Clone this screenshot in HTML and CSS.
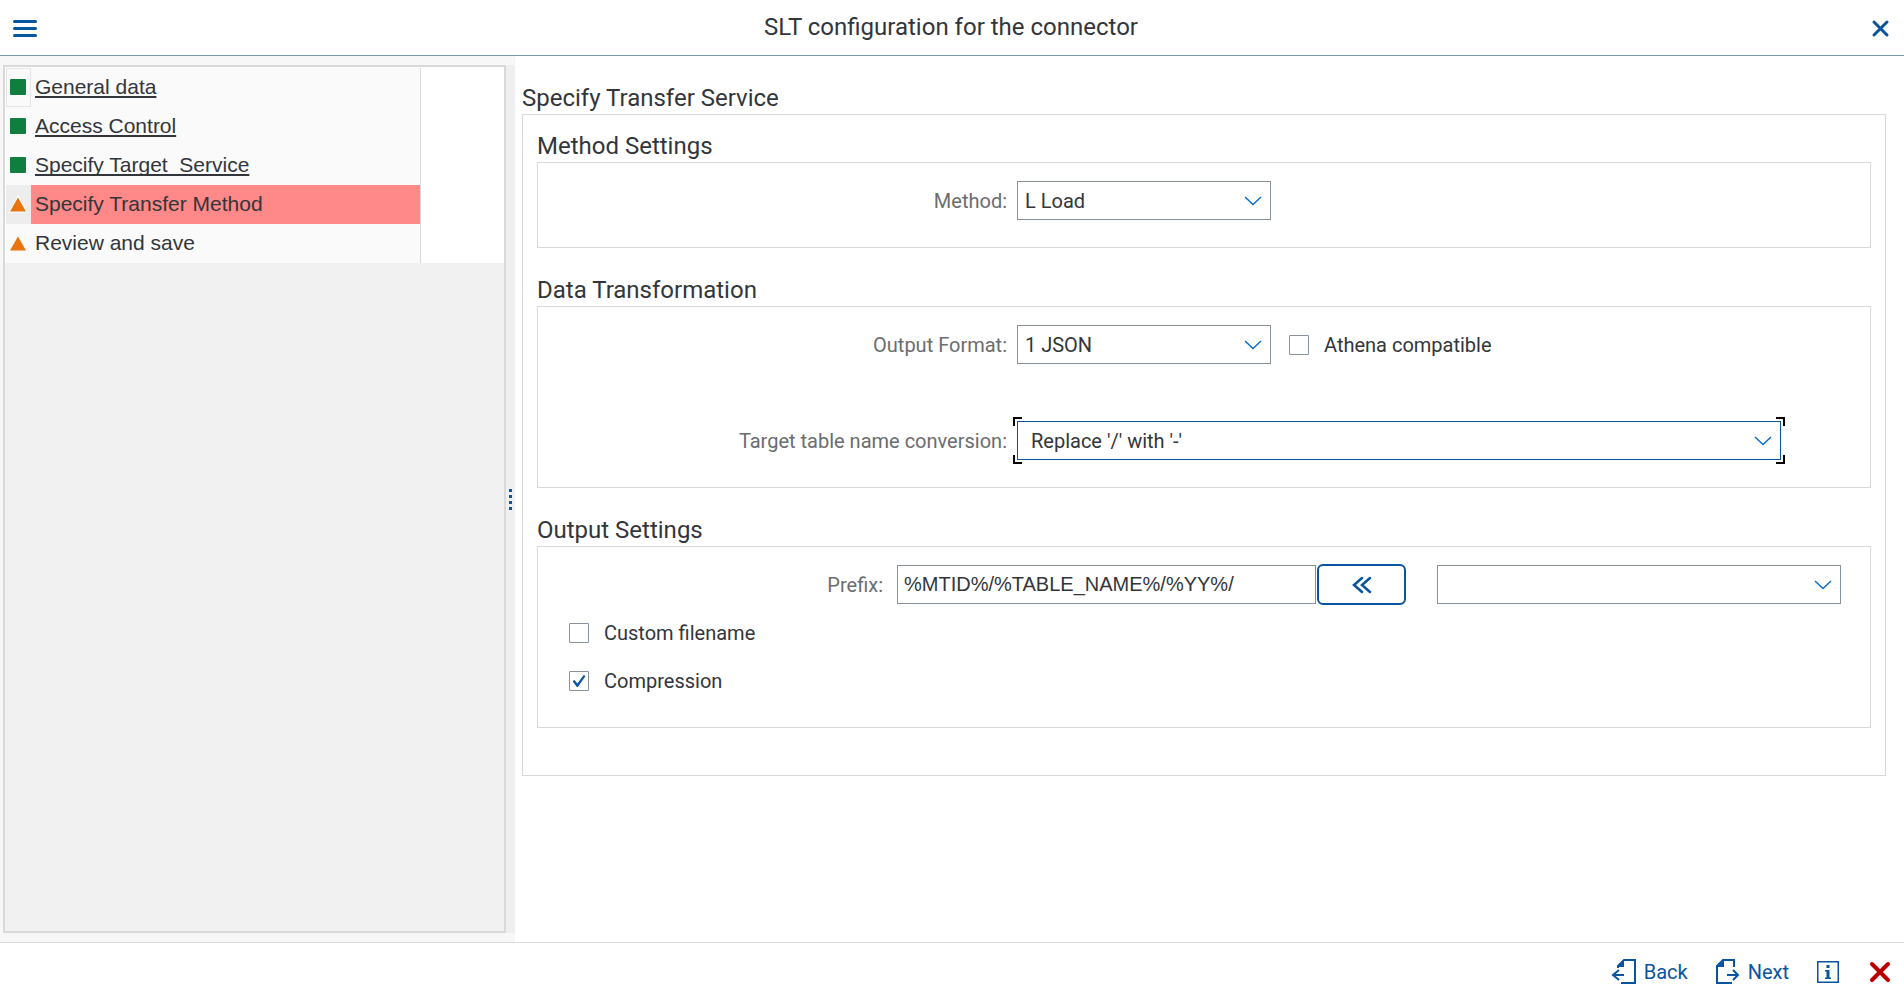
FILE: index.html
```html
<!DOCTYPE html>
<html lang="en">
<head>
<meta charset="utf-8">
<title>SLT configuration for the connector</title>
<link rel="stylesheet" href="styles.css">
</head>
<body>
<header class="topbar">
  <button class="icon-button" type="button" aria-label="Menu">
    <svg width="24" height="18" viewBox="0 0 24 18"><path d="M1.500 1.500h21M1.500 8.500h21M1.500 15.500h21" class="stroke thick"/></svg>
  </button>
  <h1 class="topbar-title">SLT configuration for the connector</h1>
  <button class="icon-button" type="button" aria-label="Close">
    <svg width="17" height="17" viewBox="0 0 17 17"><path d="M2 2l13 13M15 2L2 15" class="stroke thick"/></svg>
  </button>
</header>

<div class="workspace">
  <aside class="sidebar">
    <nav class="step-box" aria-label="Steps">
      <ol class="steps">
        <li class="step">
          <span class="step-status framed"><svg width="16" height="16" viewBox="0 0 16 16"><rect width="16" height="16" rx="1" class="done"/></svg></span>
          <span class="step-name"><a href="#general">General data</a></span>
        </li>
        <li class="step">
          <span class="step-status"><svg width="16" height="16" viewBox="0 0 16 16"><rect width="16" height="16" rx="1" class="done"/></svg></span>
          <span class="step-name"><a href="#access">Access Control</a></span>
        </li>
        <li class="step">
          <span class="step-status"><svg width="16" height="16" viewBox="0 0 16 16"><rect width="16" height="16" rx="1" class="done"/></svg></span>
          <span class="step-name"><a href="#target">Specify Target&nbsp; Service</a></span>
        </li>
        <li class="step current" aria-current="step">
          <span class="step-status"><svg width="16" height="16" viewBox="0 0 16 16"><path d="M8 -1.500L17.500 16.500H-1.500z" class="halo"/><path d="M8 1.500L16 15.500H0z" class="open"/></svg></span>
          <span class="step-name">Specify Transfer Method</span>
        </li>
        <li class="step">
          <span class="step-status"><svg width="16" height="16" viewBox="0 0 16 16"><path d="M8 1.500L16 15.500H0z" class="open"/></svg></span>
          <span class="step-name">Review and save</span>
        </li>
      </ol>
    </nav>
    <div class="splitter"><i></i><i></i><i></i><i></i></div>
  </aside>

  <main class="content">
    <h2 class="heading">Specify Transfer Service</h2>
    <div class="frame">
      <section>
        <h3 class="heading">Method Settings</h3>
        <div class="panel">
          <div class="row">
            <label class="field-label" for="method">Method:</label>
            <span class="select">
              <select id="method"><option>L Load</option></select>
              <svg width="18" height="10" viewBox="0 0 18 10"><path d="M1 1l8 7.500L17 1" class="chevron"/></svg>
            </span>
          </div>
        </div>
      </section>
      <section>
        <h3 class="heading">Data Transformation</h3>
        <div class="panel spaced">
          <div class="row">
            <label class="field-label" for="format">Output Format:</label>
            <span class="select">
              <select id="format"><option>1 JSON</option></select>
              <svg width="18" height="10" viewBox="0 0 18 10"><path d="M1 1l8 7.500L17 1" class="chevron"/></svg>
            </span>
            <label class="check inline"><input type="checkbox">Athena compatible</label>
          </div>
          <div class="row">
            <label class="field-label" for="conversion">Target table name conversion:</label>
            <span class="select wide focused">
              <select id="conversion"><option>Replace '/' with '-'</option></select>
              <svg width="18" height="10" viewBox="0 0 18 10"><path d="M1 1l8 7.500L17 1" class="chevron"/></svg>
              <span class="corners"></span>
            </span>
          </div>
        </div>
      </section>
      <section>
        <h3 class="heading">Output Settings</h3>
        <div class="panel tall">
          <div class="row">
            <label class="field-label short" for="prefix">Prefix:</label>
            <input class="text-input" id="prefix" type="text" value="%MTID%/%TABLE_NAME%/%YY%/">
            <button class="insert" type="button" aria-label="Insert placeholder">
              <svg width="20" height="16" viewBox="0 0 20 16"><path d="M10 1L2 8l8 7M18 1l-8 7 8 7" class="stroke double"/></svg>
            </button>
            <span class="select medium">
              <select aria-label="Placeholder"><option></option></select>
              <svg width="18" height="10" viewBox="0 0 18 10"><path d="M1 1l8 7.500L17 1" class="chevron"/></svg>
            </span>
          </div>
          <label class="check"><input type="checkbox">Custom filename</label>
          <label class="check"><input type="checkbox" checked>Compression</label>
        </div>
      </section>
    </div>
  </main>
</div>

<footer class="actions">
  <button class="action" type="button">
    <svg width="24" height="26" viewBox="0 0 24 26"><path d="M5 8l7-7v7z" class="fill"/><path d="M6 9V7l6-6h11v23H9M12 16H1M7 11l-6 5 6 5" class="line"/></svg>
    Back
  </button>
  <button class="action" type="button">
    <svg width="24" height="26" viewBox="0 0 24 26"><path d="M1 8l7-7v7z" class="fill"/><path d="M18 8V1H7L1 7v17h15M11 16h11M17 11l5 5-5 5" class="line"/></svg>
    Next
  </button>
  <button class="action" type="button" aria-label="Information">
    <svg width="22" height="22" viewBox="0 0 22 22"><rect x="0.750" y="0.750" width="20.500" height="20.500" class="line light"/><path d="M9.500 4h3v3h-3zM8 9h4.500v7.500H14V18H8v-1.500h1.500v-6H8z" class="fill"/></svg>
  </button>
  <button class="action cancel-action" type="button" aria-label="Cancel">
    <svg width="20" height="20" viewBox="0 0 20 20"><path d="M2 2l16 16M18 2L2 18" class="cancel"/></svg>
  </button>
</footer>
</body>
</html>
```
FILE: styles.css
```css
* { box-sizing: border-box; }

body {
  margin: 0;
  min-height: 100vh;
  display: flex;
  flex-direction: column;
  background: #fff;
  color: #32363a;
  font: 20px/24px Roboto, "Liberation Sans", sans-serif;
}

button, input, select { font: inherit; color: inherit; }
button { padding: 0; border: 0; background: none; cursor: pointer; }
svg { display: block; flex: none; overflow: visible; }

.stroke { fill: none; stroke: #0854a0; stroke-width: 2; stroke-linecap: round; }
.double { stroke-width: 2.500; }
.thick { stroke-width: 3; }
.chevron { fill: none; stroke: #0a6ed1; stroke-width: 1.500; }
.line { fill: none; stroke: #0854a0; stroke-width: 2; }
.light { stroke-width: 1.500; }
.fill { fill: #0854a0; }
.cancel { fill: none; stroke: #b00; stroke-width: 4; stroke-linecap: round; }
.done { fill: #107e3e; }
.open { fill: #e9730c; }
.halo { fill: #fff; }

/* Title bar */
.topbar {
  display: grid;
  grid-template-columns: 1fr auto 1fr;
  align-items: center;
  height: 56px;
  padding: 0 15px 0 13px;
  border-bottom: 1px solid #7996b4;
}
.topbar-title { margin: 0; padding-bottom: 2px; font-size: 24px; font-weight: 400; line-height: 32px; }
.icon-button { justify-self: start; padding-top: 2px; }
.icon-button:last-child { justify-self: end; }

/* Step list */
.workspace { flex: 1; display: flex; }
.sidebar {
  display: flex;
  flex: none;
  width: 515px;
  padding: 9px 0 9px 3px;
  background: #f7f7f7;
}
.step-box { flex: 1; border: 2px solid #d9d9d9; background: #f1f1f1; }
.steps {
  margin: 0;
  padding: 1px 83px 0 1px;
  list-style: none;
  background: #fff;
  font-family: "Liberation Sans", Arial, sans-serif;
  font-size: 21px;
}
.step { display: flex; height: 39px; background: #fafafa; border-right: 1px solid #d9d9d9; }
.step-status {
  display: flex;
  align-items: center;
  width: 25px;
  padding: 0 0 2px 4px;
  border: 0 solid #e5e5e5;
}
.step-status.framed { border-width: 1px; padding-left: 3px; }
.step-name { flex: 1; padding: 7px 4px; }
.step-name a { color: inherit; text-decoration-thickness: 2px; text-underline-offset: 2px; text-decoration-skip-ink: none; }
.current .step-status { background: #ededed; }
.current .step-name { background: #ff8888; }

.splitter {
  display: flex;
  flex-direction: column;
  align-items: center;
  justify-content: center;
  gap: 3px;
  width: 9px;
  background: #edeff0;
}
.splitter i { width: 3px; height: 3px; background: #0854a0; }

/* Form */
.content { flex: 1; padding: 22px 18px 0 7px; }
.heading { margin: 0; padding: 6px 0 2px; font-size: 24px; font-weight: 400; line-height: 28px; }
.frame { padding: 11px 14px 47px; border: 1px solid #d9d9d9; }
.frame section + section { margin-top: 22px; }
.panel { padding: 18px 0 27px; border: 1px solid #d9d9d9; }
.panel.tall { padding-bottom: 34px; }
.row { display: flex; align-items: center; height: 39px; }
.spaced .row + .row { margin-top: 57px; }
.field-label { width: 469px; margin-right: 10px; text-align: right; color: #6a6d70; }
.field-label.short { width: 345px; margin-right: 14px; }

.select { position: relative; display: flex; align-items: center; width: 254px; }
.select.wide { width: 764px; }
.select.medium { width: 404px; margin-left: 31px; }
.select select {
  width: 100%;
  height: 39px;
  padding: 0 40px 0 7px;
  appearance: none;
  border: 1px solid #89919a;
  border-radius: 0;
  background: #fff;
}
.select svg { position: absolute; right: 9px; pointer-events: none; }
.select.focused select { padding-left: 13px; border-color: #0854a0; }
.corners {
  position: absolute;
  inset: -4px;
  pointer-events: none;
  --h: linear-gradient(#000, #000);
  background:
    var(--h) left top / 9px 2px, var(--h) left top / 2px 9px,
    var(--h) right top / 9px 2px, var(--h) right top / 2px 9px,
    var(--h) left bottom / 9px 2px, var(--h) left bottom / 2px 9px,
    var(--h) right bottom / 9px 2px, var(--h) right bottom / 2px 9px;
  background-repeat: no-repeat;
}

.text-input {
  width: 419px;
  height: 39px;
  padding: 0 6px;
  border: 1px solid #89919a;
  border-radius: 0;
  font-family: "Liberation Sans", Arial, sans-serif;
}
.insert {
  display: flex;
  align-items: center;
  justify-content: center;
  width: 89px;
  height: 41px;
  margin-left: 1px;
  border: 2px solid #0854a0;
  border-radius: 6px;
  background: #fff;
}

.check { display: flex; align-items: center; width: max-content; height: 24px; margin: 24px 0 0 31px; }
.row + .check { margin-top: 17px; }
.check.inline { margin: 0 0 0 18px; }
.check input {
  display: grid;
  place-items: center;
  width: 20px;
  height: 20px;
  margin: 0 15px 0 0;
  appearance: none;
  border: 1px solid #89919a;
  border-radius: 1px;
  background: #fff;
}
.check input:checked::after {
  content: "";
  width: 13px;
  height: 12px;
  background: #0854a0;
  clip-path: polygon(0 52%, 14% 42%, 38% 70%, 86% 0, 100% 8%, 42% 100%, 34% 100%);
}

/* Footer */
.actions {
  display: flex;
  align-items: center;
  justify-content: flex-end;
  gap: 28px;
  height: 60px;
  padding: 0 14px 2px;
  border-top: 1px solid #d9d9d9;
}
.action { display: flex; align-items: center; gap: 8px; color: #0854a0; }
.cancel-action { margin-left: 3px; }
```
